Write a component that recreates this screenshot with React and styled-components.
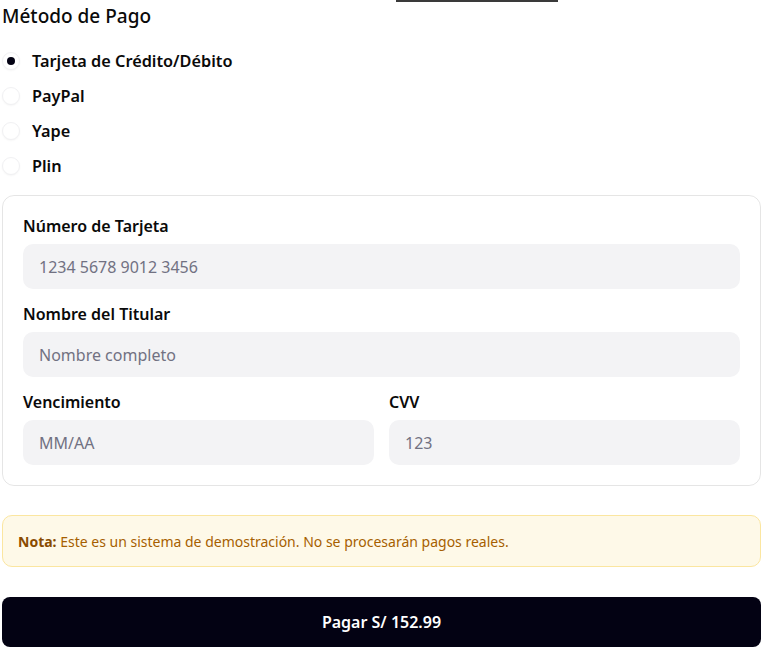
import styled, { createGlobalStyle } from "styled-components";
import { useState } from "react";

const GlobalStyle = createGlobalStyle`
  body {
    margin: 0;
    background: #ffffff;
    font-family: "Noto Sans", "Open Sans", sans-serif;
    color: #0a0a0a;
  }
  * { box-sizing: border-box; }
`;

const METHODS = ["Tarjeta de Crédito/Débito", "PayPal", "Yape", "Plin"];

const App = () => {
  const [method, setMethod] = useState(METHODS[0]);

  return (
    <>
      <GlobalStyle />
      <Page>
        <TopEdge />
        <Title>Método de Pago</Title>

        <RadioList>
          {METHODS.map((m) => (
            <RadioRow key={m} onClick={() => setMethod(m)}>
              <RadioDot checked={method === m} />
              <RadioLabel>{m}</RadioLabel>
            </RadioRow>
          ))}
        </RadioList>

        <Card>
          <Field>
            <Label>Número de Tarjeta</Label>
            <Input placeholder="1234 5678 9012 3456" />
          </Field>
          <Field>
            <Label>Nombre del Titular</Label>
            <Input placeholder="Nombre completo" />
          </Field>
          <Row>
            <Field>
              <Label>Vencimiento</Label>
              <Input placeholder="MM/AA" />
            </Field>
            <Field>
              <Label>CVV</Label>
              <Input placeholder="123" />
            </Field>
          </Row>
        </Card>

        <Note>
          <b>Nota:</b> Este es un sistema de demostración. No se procesarán pagos
          reales.
        </Note>

        <PayButton>Pagar S/ 152.99</PayButton>
      </Page>
    </>
  );
};

export default App;

const Page = styled.div`
  width: 759px;
  margin-left: 2px;
  display: flex;
  flex-direction: column;
`;

const TopEdge = styled.div`
  width: 162px;
  height: 2px;
  margin-left: 394px;
  background: #3a3a3a;
`;

const Title = styled.h3`
  margin: 0;
  font-size: 19px;
  font-weight: 500;
  line-height: 28px;
`;

const RadioList = styled.div`
  display: flex;
  flex-direction: column;
  gap: 11px;
  margin-top: 19px;
`;

const RadioRow = styled.label`
  display: flex;
  align-items: center;
  gap: 12px;
  height: 24px;
  cursor: pointer;
`;

const RadioDot = styled.span`
  width: 18px;
  height: 18px;
  border-radius: 50%;
  border: 1px solid #f1f1f3;
  box-shadow: 0 1px 2px rgba(0, 0, 0, 0.04);
  background: #fff;
  display: flex;
  align-items: center;
  justify-content: center;
  &::after {
    content: "";
    width: 8px;
    height: 8px;
    border-radius: 50%;
    background: #030213;
    display: ${({ checked }) => (checked ? "block" : "none")};
  }
`;

const RadioLabel = styled.span`
  font-size: 16.3px;
  font-weight: 600;
`;

const Card = styled.div`
  margin-top: 17px;
  border: 1px solid rgba(0, 0, 0, 0.1);
  border-radius: 12px;
  padding: 18px 20px 20px;
  display: flex;
  flex-direction: column;
  gap: 13px;
`;

const Field = styled.div`
  display: flex;
  flex-direction: column;
  gap: 6px;
  flex: 1;
`;

const Row = styled.div`
  display: flex;
  gap: 15px;
`;

const Label = styled.label`
  font-size: 16px;
  font-weight: 600;
  line-height: 24px;
`;

const Input = styled.input`
  height: 45px;
  width: 100%;
  border: none;
  outline: none;
  border-radius: 10px;
  background: #f3f3f5;
  padding: 0 16px;
  font-family: inherit;
  font-size: 16px;
  color: #0a0a0a;
  &::placeholder {
    color: #717182;
  }
`;

const Note = styled.div`
  margin-top: 29px;
  background: #fef9e8;
  border: 1px solid #fbe6a0;
  border-radius: 10px;
  padding: 0 15px;
  height: 52px;
  display: flex;
  align-items: center;
  font-size: 14px;
  color: #a65f00;
  white-space: pre;
  b {
    font-weight: 700;
    color: #894b00;
  }
`;

const PayButton = styled.button`
  margin-top: 30px;
  height: 50px;
  border: none;
  border-radius: 8px;
  background: #030213;
  color: #ffffff;
  font-family: inherit;
  font-size: 16px;
  font-weight: 600;
  cursor: pointer;
`;
